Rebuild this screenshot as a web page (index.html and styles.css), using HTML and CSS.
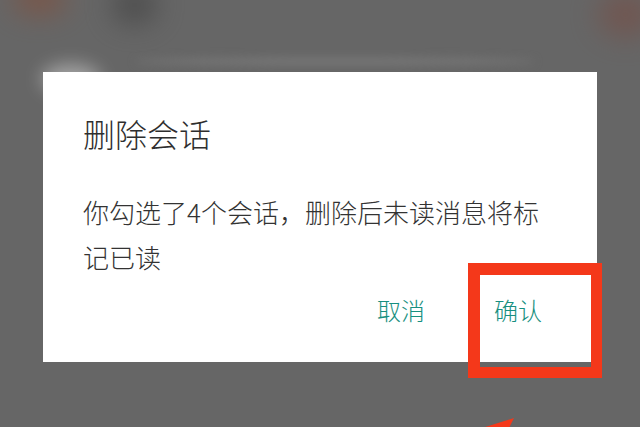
FILE: index.html
```html
<!DOCTYPE html>
<html lang="zh-CN">
<head>
<meta charset="utf-8">
<title>删除会话</title>
<link rel="stylesheet" href="styles.css">
</head>
<body>
<div class="screen">
  <div class="blob blob-orange-left"></div>
  <div class="blob blob-dark"></div>
  <div class="blob blob-orange-right"></div>
  <div class="band"></div>
  <div class="dialog">
    <div class="glare"></div>
    <h1 class="title">删除会话</h1>
    <p class="message">你勾选了4个会话，删除后未读消息将标记已读</p>
    <div class="actions">
      <span class="btn">取消</span>
      <span class="btn">确认</span>
    </div>
  </div>
  <div class="highlight"></div>
  <svg class="arrow" width="640" height="427" viewBox="0 0 640 427">
    <polygon points="514,418 482,428 509,428" fill="#f4381a"/>
  </svg>
</div>
</body>
</html>
```
FILE: styles.css
```css
html, body {
  margin: 0;
  padding: 0;
}
body {
  width: 640px;
  height: 427px;
  overflow: hidden;
  background: #666666;
  font-family: "Noto Sans CJK SC", "Noto Sans", sans-serif;
}
.screen {
  position: relative;
  width: 640px;
  height: 427px;
  padding: 72px 0 0 43px;
  box-sizing: border-box;
}
.blob {
  position: absolute;
  border-radius: 50%;
  filter: blur(14px);
}
.blob-orange-left {
  left: 12px;
  top: -16px;
  width: 55px;
  height: 30px;
  background: #8a4a32;
  opacity: 0.6;
}
.blob-dark {
  left: 112px;
  top: -14px;
  width: 45px;
  height: 38px;
  background: #3c3c3c;
  opacity: 0.6;
}
.blob-orange-right {
  left: 598px;
  top: -8px;
  width: 55px;
  height: 45px;
  background: #7a4a40;
  opacity: 0.55;
}
.band {
  position: absolute;
  left: 135px;
  top: 57px;
  width: 400px;
  height: 9px;
  border-radius: 50%;
  background: #757575;
  filter: blur(4px);
}
.dialog {
  position: relative;
  width: 554px;
  height: 290px;
  box-sizing: border-box;
  background: #ffffff;
  padding: 41px 55px 0 40px;
}
.glare {
  position: absolute;
  left: -2px;
  top: -8px;
  width: 60px;
  height: 30px;
  border-radius: 50%;
  background: rgba(255, 255, 255, 0.4);
  filter: blur(9px);
}
.title {
  margin: 0;
  font-size: 32px;
  line-height: 40px;
  font-weight: 300;
  color: #2e2e2e;
}
.message {
  margin: 36px 0 0;
  width: 474px;
  font-size: 26px;
  line-height: 45px;
  font-weight: 300;
  color: #333333;
}
.actions {
  display: flex;
  justify-content: flex-end;
  gap: 69px;
  margin-top: 16px;
}
.btn {
  font-size: 24px;
  line-height: 30px;
  font-weight: 300;
  color: #178f80;
}
.highlight {
  position: absolute;
  left: 468px;
  top: 263px;
  width: 134px;
  height: 115px;
  box-sizing: border-box;
  border: 12px solid #f4381a;
  border-right-width: 11px;
  border-bottom-width: 11px;
}
.arrow {
  position: absolute;
  left: 0;
  top: 0;
}
```
